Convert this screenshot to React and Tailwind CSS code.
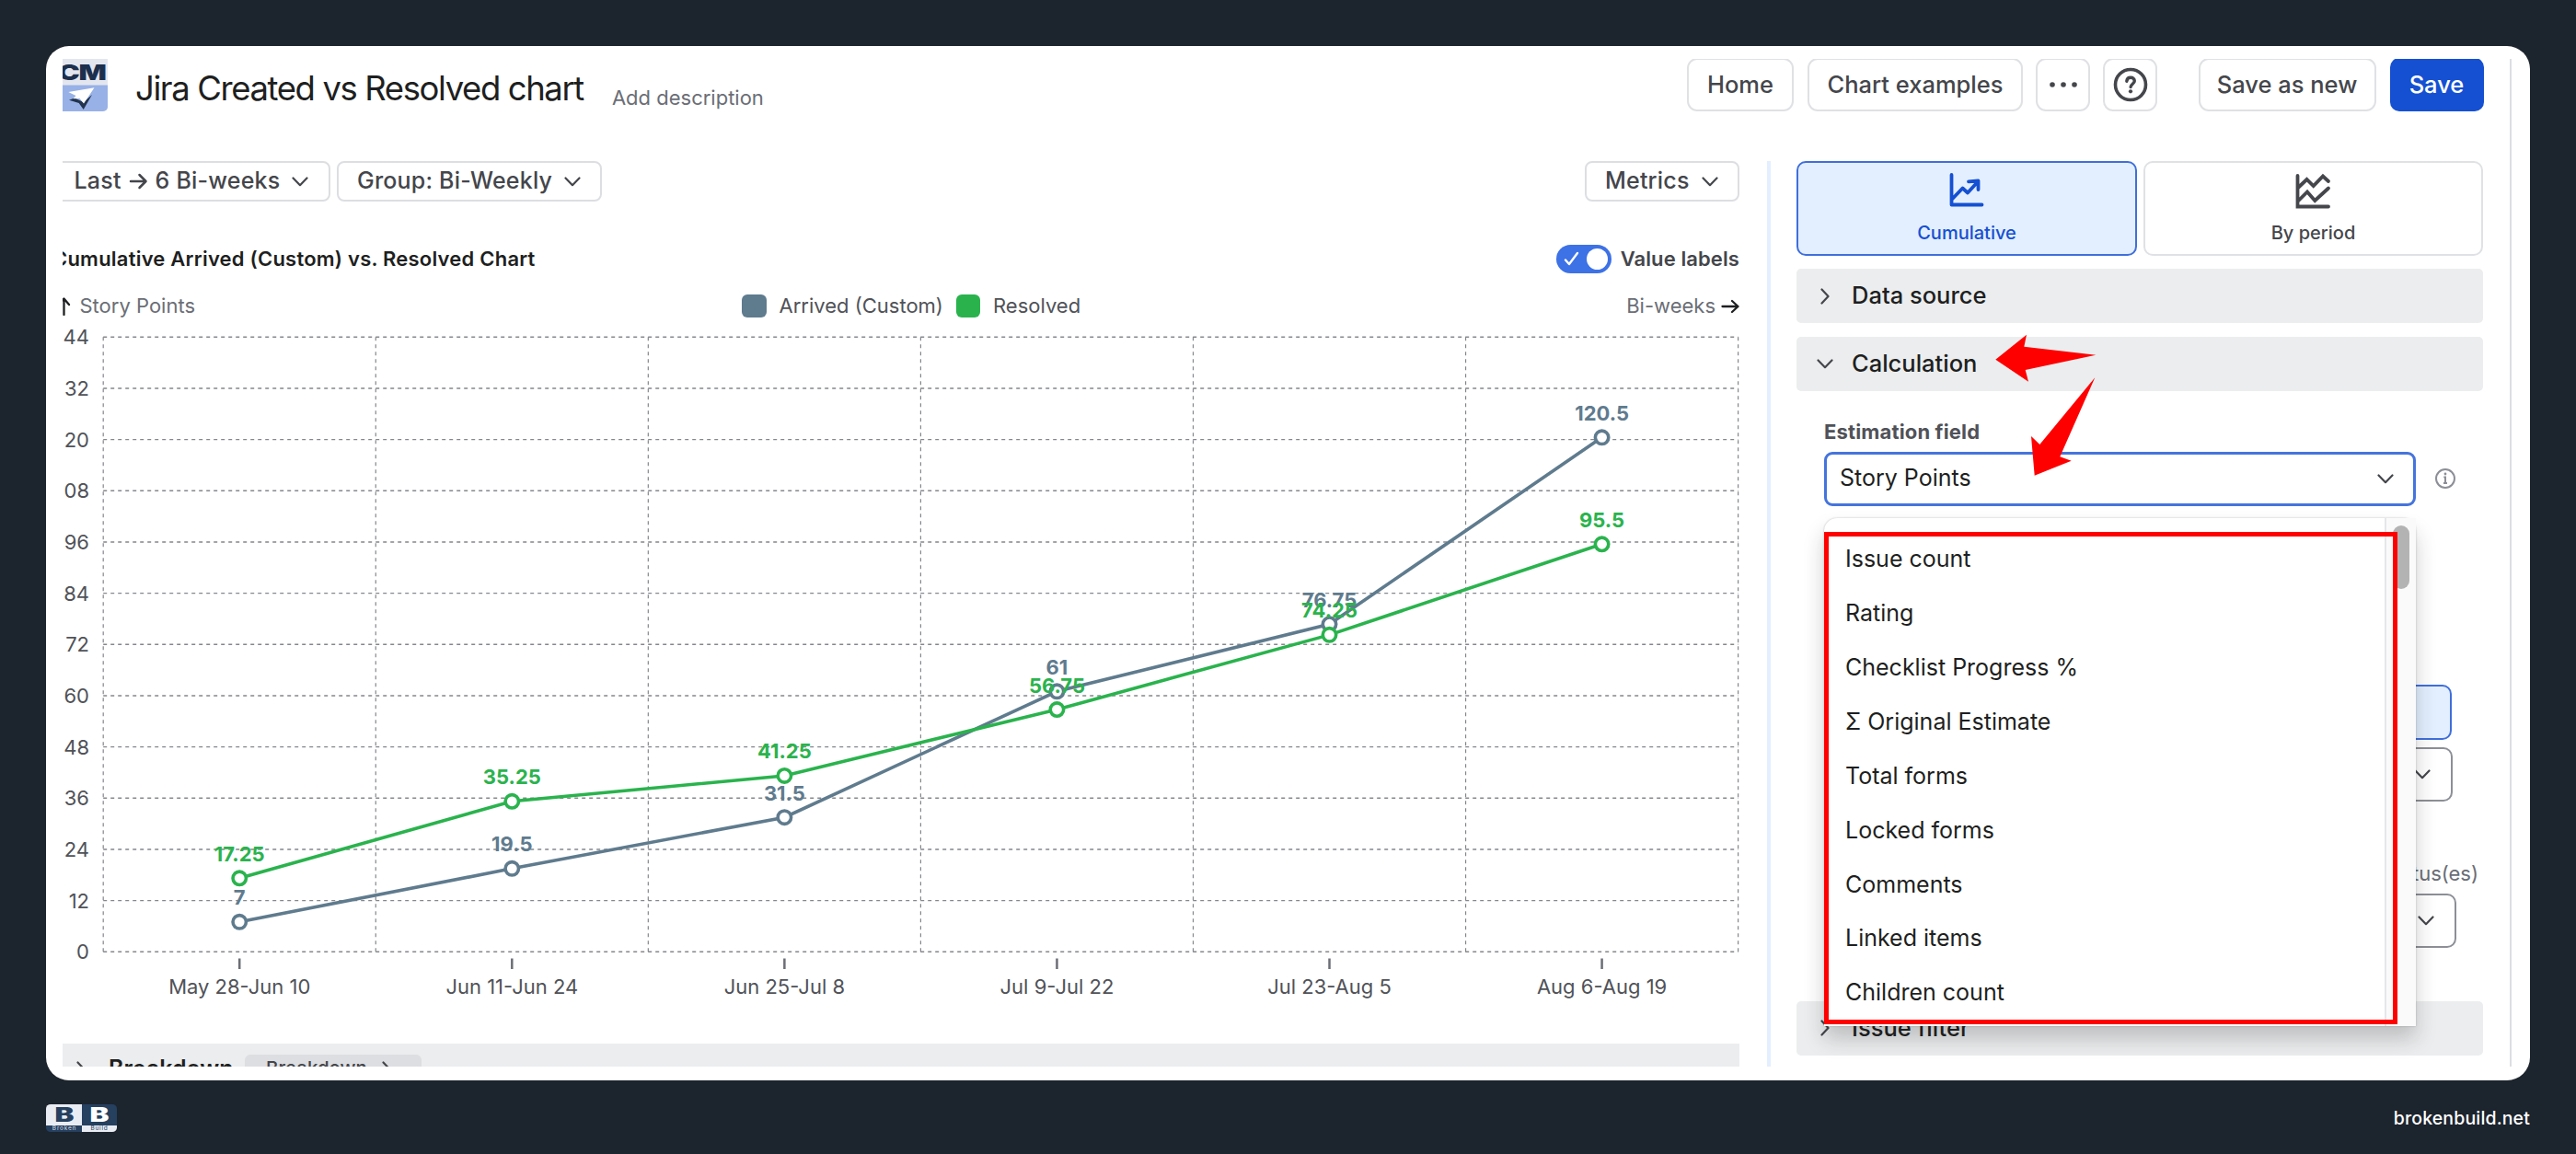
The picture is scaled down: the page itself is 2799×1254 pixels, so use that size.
import React from 'react';

const fields = [
  'Issue count',
  'Rating',
  'Checklist Progress %',
  'Σ Original Estimate',
  'Total forms',
  'Locked forms',
  'Comments',
  'Linked items',
  'Children count',
];

const periods = [
  { label: 'May 28-Jun 10', arrived: 7, resolved: 17.25 },
  { label: 'Jun 11-Jun 24', arrived: 19.5, resolved: 35.25 },
  { label: 'Jun 25-Jul 8', arrived: 31.5, resolved: 41.25 },
  { label: 'Jul 9-Jul 22', arrived: 61, resolved: 56.75 },
  { label: 'Jul 23-Aug 5', arrived: 76.75, resolved: 74.25 },
  { label: 'Aug 6-Aug 19', arrived: 120.5, resolved: 95.5 },
];

const series = [
  { key: 'arrived', color: '#5f7b8e' },
  { key: 'resolved', color: '#2ab34d' },
];

// Plot area inside the chart svg
const LEFT = 44.2;
const TOP = 21.3;
const STEP = 296.07;
const HEIGHT = 668;
const MAX = 144;

const xAt = (i) => LEFT + STEP * (i + 0.5);
const yAt = (v) => TOP + HEIGHT - (v / MAX) * HEIGHT;

const ChevronDown = ({ className = '' }) => (
  <svg width="18" height="11" viewBox="0 0 18 11" fill="none" stroke="#44464b" strokeWidth="2.2" strokeLinecap="round" strokeLinejoin="round" className={`shrink-0 ${className}`}>
    <path d="M1.5 1.5 9 9.2l7.5-7.7" />
  </svg>
);

const ChevronRight = ({ className = '' }) => (
  <svg width="10" height="18" viewBox="0 0 10 18" fill="none" stroke="#44464b" strokeWidth="2.2" strokeLinecap="round" strokeLinejoin="round" className={`shrink-0 ${className}`}>
    <path d="M1.5 1.5 8.5 9l-7 7.5" />
  </svg>
);

const AppLogo = () => (
  <svg width="57" height="64" viewBox="0 0 57 64" className="-ml-2 -mt-[7px] shrink-0">
    <rect width="57" height="64" rx="5" fill="#e3e6ef" />
    <path d="M0 35.5h57V59a5 5 0 0 1-5 5H5a5 5 0 0 1-5-5z" fill="#98b1e6" />
    <text x="3" y="30" textLength="51.5" lengthAdjust="spacingAndGlyphs" fontFamily="Inter" fontWeight="900" fontSize="23.5" letterSpacing="-1" fill="#1c2f4d">CM</text>
    <path d="M15 51.7 21 49.5l9.7 4.5 9.3-8-9.3 16-5-7z" fill="#22344f" />
    <path d="M14.3 43 42.5 38.2 31 55.5l-4.500-5.500-7 .3 3-3.300z" fill="#fff" />
  </svg>
);

const Header = () => (
  <header className="flex h-[111px] w-full items-start pr-[28.5px]">
    <AppLogo />
    <h1 className="ml-[30px] h-[65px] whitespace-nowrap text-[36.5px] leading-[65px] tracking-[-1.4px] text-[#1e1f21]">
      Jira Created vs Resolved chart
    </h1>
    <span className="ml-[31px] h-[85px] whitespace-nowrap text-[22px] leading-[85px] text-[#6b6e76]">Add description</span>
    <div className="-mt-px ml-auto flex h-[58px] text-[25.5px] font-medium text-[#44464b]">
      <button className="mr-[15px] w-[116px] rounded-[11px] border-2 border-[#e0e1e4]">Home</button>
      <button className="mr-[14px] w-[234px] rounded-[11px] border-2 border-[#e0e1e4] whitespace-nowrap">Chart examples</button>
      <button className="mr-[14px] flex w-[59px] items-center justify-center rounded-[11px] border-2 border-[#e0e1e4]">
        <svg width="30" height="6" viewBox="0 0 30 6" fill="#44464b">
          <circle cx="3" cy="3" r="2.8" />
          <circle cx="15" cy="3" r="2.8" />
          <circle cx="27" cy="3" r="2.8" />
        </svg>
      </button>
      <button className="mr-[44.5px] flex w-[59px] items-center justify-center rounded-[11px] border-2 border-[#e0e1e4]">
        <svg width="38" height="38" viewBox="0 0 38 38" fill="none" stroke="#44464b" strokeWidth="3.6">
          <circle cx="19" cy="19" r="16.5" />
          <path d="M14.8 15.2c.3-2.500 2-3.900 4.300-3.900 2.400 0 4.200 1.500 4.200 3.700 0 3.100-4.200 3.400-4.200 6.600" strokeWidth="3.4" strokeLinecap="round" />
          <circle cx="19" cy="26.3" r="2.1" fill="#44464b" stroke="none" />
        </svg>
      </button>
      <button className="mr-[15px] w-[193px] rounded-[11px] border-2 border-[#e0e1e4] whitespace-nowrap">Save as new</button>
      <button className="w-[102px] rounded-[10px] bg-[#1550d2] text-white">Save</button>
    </div>
  </header>
);

const FilterBar = () => (
  <div className="flex h-[44px] text-[25px] font-medium tracking-[0.2px] text-[#44464b]">
    <button className="-ml-3 flex w-[303px] items-center rounded-[8px] border-2 border-[#dddee1] pl-[22.5px] whitespace-nowrap">
      Last
      <svg width="21" height="20" viewBox="0 0 21 20" fill="none" stroke="#44464b" strokeWidth="2.5" strokeLinecap="round" strokeLinejoin="round" className="mx-2">
        <path d="M2 10h16M11.5 3l7 7-7 7" />
      </svg>
      6 Bi-weeks
      <ChevronDown className="mr-[22px] ml-auto" />
    </button>
    <button className="ml-[7px] flex w-[288px] items-center rounded-[8px] border-2 border-[#dddee1] pl-[20px] whitespace-nowrap">
      Group: Bi-Weekly
      <ChevronDown className="mr-[21px] ml-auto" />
    </button>
    <button className="ml-auto flex w-[168px] items-center rounded-[8px] border-2 border-[#dddee1] pl-[20px]">
      Metrics
      <ChevronDown className="mr-[21px] ml-auto" />
    </button>
  </div>
);

const Toggle = () => (
  <span className="flex h-[31px] w-[60px] items-center justify-between rounded-full bg-[#3d71e6] pr-1 pl-2">
    <svg width="17" height="16" viewBox="0 0 17 16" fill="none" stroke="#fff" strokeWidth="2.4" strokeLinecap="round" strokeLinejoin="round">
      <path d="M2 9.500 6 14 15 2" />
    </svg>
    <span className="size-[23px] rounded-full bg-white" />
  </span>
);

const Legend = () => (
  <div className="mt-[24px] flex h-[25px] items-center whitespace-nowrap text-[22px] text-[#6b6e76]">
    <div className="flex w-[737.5px] items-center">
      <svg width="13" height="20" viewBox="0 0 13 20" fill="none" stroke="#1e1f21" strokeWidth="2.3" strokeLinecap="round" strokeLinejoin="round" className="-ml-1 mr-[9.5px]">
        <path d="M5.5 19V2M-2 9l7.5-7.5L11 8" />
      </svg>
      Story Points
    </div>
    <span className="h-[25px] w-[27px] rounded-[6px] bg-[#5f7b8e]" />
    <span className="ml-[14px] w-[177px] text-[#505258]">Arrived (Custom)</span>
    <span className="ml-[15.5px] h-[25px] w-[26px] rounded-[6px] bg-[#2ab34d]" />
    <span className="ml-[14px] text-[#505258]">Resolved</span>
    <span className="ml-auto">Bi-weeks</span>
    <svg width="20" height="16" viewBox="0 0 20 16" fill="none" stroke="#1e1f21" strokeWidth="2.3" strokeLinecap="round" strokeLinejoin="round" className="ml-[6px]">
      <path d="M1.500 8h16.500M12 2l6.500 6L12 14" />
    </svg>
  </div>
);

const Chart = () => (
  <svg width="1822" height="789" viewBox="0 0 1822 789" fontFamily="Inter" className="block overflow-hidden">
    <g stroke="#85878c" strokeWidth="1.4" strokeDasharray="4 4">
      {Array.from({ length: 13 }, (_, i) => (
        <line key={i} x1={LEFT} x2={LEFT + STEP * 6} y1={yAt(i * 12)} y2={yAt(i * 12)} />
      ))}
      {Array.from({ length: 7 }, (_, i) => (
        <line key={i} x1={LEFT + STEP * i} x2={LEFT + STEP * i} y1={TOP} y2={TOP + HEIGHT} strokeWidth="1.2" />
      ))}
    </g>
    <g fontSize="22" fill="#505258">
      {Array.from({ length: 13 }, (_, i) => (
        <text key={i} x="29" y={yAt(i * 12) + 8} textAnchor="end">
          {i > 8 ? String(i * 12).slice(1) : i * 12}
        </text>
      ))}
      {periods.map((p, i) => (
        <text key={p.label} x={xAt(i)} y="734.5" textAnchor="middle">
          {p.label}
        </text>
      ))}
    </g>
    {periods.map((p, i) => (
      <line key={p.label} x1={xAt(i)} x2={xAt(i)} y1="696.5" y2="708" stroke="#6b6e76" strokeWidth="2.5" />
    ))}
    {series.map((s) => (
      <polyline
        key={s.key}
        points={periods.map((p, i) => `${xAt(i)},${yAt(p[s.key])}`).join(' ')}
        fill="none"
        stroke={s.color}
        strokeWidth="3.6"
      />
    ))}
    {series.map((s) => (
      <g key={s.key}>
        {periods.map((p, i) => (
          <g key={p.label}>
            <circle cx={xAt(i)} cy={yAt(p[s.key])} r="7.2" fill="#fff" stroke={s.color} strokeWidth="3.6" />
            <text x={xAt(i)} y={yAt(p[s.key]) - 18.5} textAnchor="middle" fontSize="22" fontWeight="700" fill={s.color}>
              {p[s.key]}
            </text>
          </g>
        ))}
      </g>
    ))}
  </svg>
);

const Breakdown = () => (
  <div className="flex h-[55px] shrink-0 items-center bg-[#ebedee] text-[#1e1f21]">
    <ChevronRight className="ml-[15px]" />
    <span className="ml-[25px] w-[132px] text-[25px] font-semibold">Breakdown</span>
    <span className="ml-[16px] flex h-[31px] w-[192px] items-center rounded-[6px] bg-[#dddee1] pl-[23px] text-[20.5px] font-medium text-[#44464b]">
      Breakdown
      <ChevronRight className="ml-[16px]" />
    </span>
  </div>
);

const Section = ({ title, open, className = '' }) => (
  <div className={`flex h-[59px] items-center rounded-[5px] bg-[#ebedee] text-[25.5px] font-medium text-[#1e1f21] ${className}`}>
    <span className="flex w-[60px] pl-[22px]">{open ? <ChevronDown /> : <ChevronRight className="ml-1" />}</span>
    {title}
  </div>
);

const ModeTabs = () => (
  <div className="flex h-[102.5px] gap-[7px] text-[20px] font-medium">
    <button className="flex w-[370px] flex-col items-center rounded-[10px] border-2 border-[#3f6fdb] bg-[#e3efff] pt-[9px] leading-6 text-[#1550d2]">
      <svg width="42" height="42" viewBox="0 0 42 42" fill="none" stroke="currentColor" strokeWidth="3.8" strokeLinecap="round" strokeLinejoin="round">
        <path d="M4.500 4v32.500h33M5 30.500l11.500-12 5.500 5L33.500 11M23 11.300l10.500-.8v9.500" />
      </svg>
      <span className="mt-[13px]">Cumulative</span>
    </button>
    <button className="flex w-[369px] flex-col items-center rounded-[10px] border-2 border-[#e0e1e4] pt-[9px] leading-6 text-[#44464b]">
      <svg width="42" height="42" viewBox="0 0 42 42" fill="none" stroke="currentColor" strokeWidth="3.8" strokeLinecap="round" strokeLinejoin="miter">
        <path d="M3.500 5v33.500H37M4 18l9.500-9 7.200 7L31 5.500l6 5.500M4 32.500l10-10 8.300 9.500L37 18.500" />
      </svg>
      <span className="mt-[13px]">By period</span>
    </button>
  </div>
);

const FieldMenu = () => (
  <div className="absolute top-[72px] left-0 flex h-[552px] w-[643px] rounded-t-[14px] bg-white shadow-[0_14px_22px_rgba(30,31,33,0.22),0_0_2px_rgba(30,31,33,0.3)]">
    <ul className="flex-1 pt-[16px] text-[25px] text-[#1e1f21]">
      {fields.map((field) => (
        <li key={field} className="flex h-[58.9px] items-center pl-[23px]">
          {field}
        </li>
      ))}
    </ul>
    <div className="w-[34px] border-l-2 border-[#e6e7e9] bg-[#fafafa] pt-[8px] pl-[7px]">
      <div className="h-[69px] w-[18px] rounded-full bg-[#b3b3b3]" />
    </div>
    {/* highlight frame */}
    <div className="absolute top-[15.5px] left-0 h-[535px] w-[623px] border-[5px] border-[#ff0000]" />
  </div>
);

const Arrows = () => (
  <svg width="125" height="165" viewBox="0 0 125 165" fill="#ff0000" className="pointer-events-none absolute top-[185px] left-[208px]">
    <path d="M8.3 30.7 42 3.7 39.3 16.7 117.3 25.7 40.7 42 44 54.7z" />
    <path d="M50.7 156.7 47 114 56.3 123 116.3 50.3 78.3 136.3 90.7 140.7z" />
  </svg>
);

const SidePanel = () => (
  <aside className="relative ml-[28px] w-[746px] shrink-0">
    <ModeTabs />
    <Section title="Data source" className="mt-[14.5px]" />
    <Section title="Calculation" open className="mt-[14.5px]" />
    <div className="pl-[30px]">
      <div className="mt-[31px] h-[26px] text-[22px] leading-[26px] font-bold tracking-[0.15px] text-[#505258]">Estimation field</div>
      <div className="relative mt-[9px] flex items-center">
        <div className="flex h-[59px] w-[643px] items-center justify-between rounded-[9px] border-[3px] border-[#4574dc] pr-[21px] pl-[14px] text-[25px] text-[#1e1f21]">
          Story Points
          <ChevronDown />
        </div>
        <svg width="24" height="24" viewBox="0 0 24 24" fill="none" stroke="#8c8f97" strokeWidth="2" className="ml-5">
          <circle cx="12" cy="12" r="10" />
          <path d="M10.300 10.500H12v6.500M10 17h4" />
          <circle cx="12" cy="7" r="1.4" fill="#8c8f97" stroke="none" />
        </svg>
        <FieldMenu />
      </div>
      <div className="mt-[194px] h-[60px] w-[682px] rounded-[10px] border-2 border-[#3f6fdb] bg-[#e3efff]" />
      <div className="mt-[8px] flex h-[59px] w-[683px] items-center justify-end rounded-[10px] border-2 border-[#8c8f97] pr-[22px]">
        <ChevronDown />
      </div>
      <div className="mt-[64px] h-[28px] w-[711px] text-right text-[22px] leading-[28px] text-[#6b6e76]">Status(es)</div>
      <div className="mt-[8px] flex h-[59px] w-[687px] items-center justify-end rounded-[10px] border-2 border-[#8c8f97] pr-[22px]">
        <ChevronDown />
      </div>
    </div>
    <Section title="Issue filter" className="mt-[58px]" />
    <Arrows />
  </aside>
);

const Footer = () => (
  <footer className="flex h-[80px] items-center justify-between pt-[4px]">
    <svg width="77" height="34" viewBox="0 0 77 34" textAnchor="middle" fontFamily="Inter" className="-mt-[3px] h-[30px]" preserveAspectRatio="none">
      <path d="M5 0h34v26H0V5a5 5 0 0 1 5-5z" fill="#e9edf3" />
      <path d="M39 0h33a5 5 0 0 1 5 5v21H39zM0 26h39v8H5a5 5 0 0 1-5-5z" fill="#26405f" />
      <path d="M39 26h38v3a5 5 0 0 1-5 5H39z" fill="#e9edf3" />
      <g fontWeight="900" fontSize="24">
        <text x="20" y="22" fill="#26405f" textLength="21" lengthAdjust="spacingAndGlyphs">B</text>
        <text x="58" y="22" fill="#fff" textLength="21" lengthAdjust="spacingAndGlyphs">B</text>
      </g>
      <g fontSize="6.5" letterSpacing="0.8">
        <text x="20" y="32.3" fill="#d5dce6">Broken</text>
        <text x="58" y="32.3" fill="#26405f">Build</text>
      </g>
    </svg>
    <span className="text-[19.5px] font-medium tracking-[0.15px] text-white">brokenbuild.net</span>
  </footer>
);

export default function App() {
  return (
    <div className="h-[1254px] w-[2799px] bg-[#1c242d] px-[50px] pt-[50px] font-['Inter',sans-serif]">
      <div className="h-[1124px] overflow-hidden rounded-[25px] bg-white pt-[14px] pl-[18px]">
        <div className="flex h-[1095px] overflow-hidden">
          <div className="w-[2659px] shrink-0">
            <Header />
            <div className="flex">
              <main className="w-[1822px] shrink-0 overflow-hidden">
                <FilterBar />
                <div className="mt-[47px] flex h-[30px] items-center justify-between whitespace-nowrap text-[22px] font-semibold">
                  <h2 className="-ml-[11px] tracking-[0.22px] text-[#1e1f21]">Cumulative Arrived (Custom) vs. Resolved Chart</h2>
                  <div className="flex items-center gap-[10px] tracking-[0.1px] text-[#44464b]">
                    <Toggle />
                    Value labels
                  </div>
                </div>
                <Legend />
                <Chart />
                <Breakdown />
              </main>
              <div className="ml-[30px] w-1 bg-[#e3efff]" />
              <SidePanel />
            </div>
          </div>
          <div className="w-[2px] bg-[#dddee1]" />
        </div>
      </div>
      <Footer />
    </div>
  );
}
